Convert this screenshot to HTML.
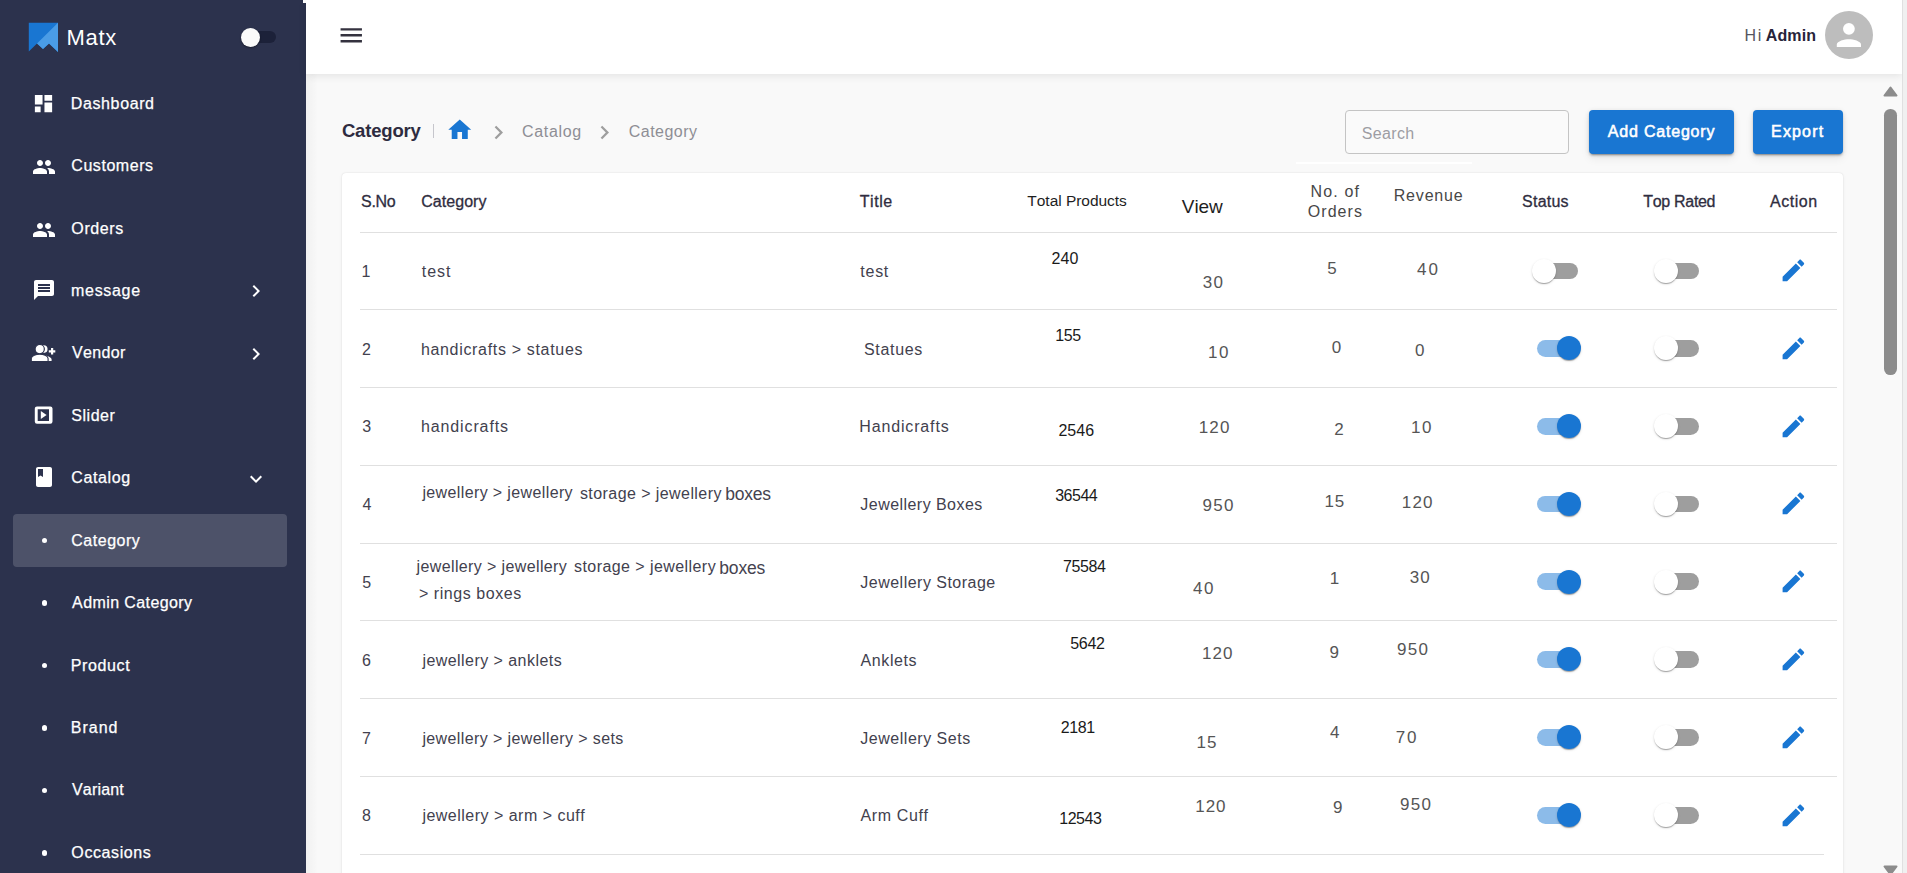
<!DOCTYPE html>
<html><head><meta charset="utf-8"><style>
html,body{margin:0;padding:0;width:1907px;height:873px;overflow:hidden;background:#f9f9f9;font-family:"Liberation Sans",sans-serif;}
.t{position:absolute;white-space:pre;line-height:1.117;font-kerning:none;}
.ic{position:absolute;display:block;}
</style></head><body>
<div style="position:absolute;left:306px;top:74px;width:1596px;height:799px;background:#f9f9f9"></div>
<div style="position:absolute;left:306px;top:74px;width:12px;height:799px;background:linear-gradient(to right,rgba(0,0,0,0.035),rgba(0,0,0,0))"></div>
<div style="position:absolute;left:0;top:0;width:306px;height:873px;background:#2c324d"></div>
<div style="position:absolute;left:303px;top:0;width:3px;height:3px;background:#fff"></div>
<svg class="ic" style="left:28px;top:22px;width:31px;height:31px" viewBox="0 0 31 31">
<polygon fill="#1976d2" points="0.8,0.8 30,0.8 30,30 21,21.5 15,27 9,21.5 0.8,29.5"/>
<polygon fill="#4a9ce6" points="30,0.8 30,30 21,21.5 15,27 9,21.5"/>
</svg>
<div class="t" style="left:66.40px;top:25.79px;font-size:22px;color:#ffffff;font-weight:400;letter-spacing:0.722px;">Matx</div>
<div style="position:absolute;left:243px;top:31px;width:33px;height:12px;border-radius:6px;background:#1c2139"></div>
<div style="position:absolute;left:241px;top:28px;width:19px;height:19px;border-radius:50%;background:#fafafa;box-shadow:0 1px 2px rgba(0,0,0,.4)"></div>
<svg class="ic" style="left:32.25px;top:91.50px;width:23px;height:23px" viewBox="0 0 24 24"><path fill="#ffffff" d="M3 13h8V3H3v10zm0 8h6v-6H3v6zm10 0h8V11h-8v10zm0-18v6h8V3h-8z"/></svg>
<div class="t" style="left:70.79px;top:94.92px;font-size:16px;color:#ffffff;font-weight:400;letter-spacing:0.621px;-webkit-text-stroke:0.25px #fff;">Dashboard</div>
<svg class="ic" style="left:31.60px;top:155.43px;width:24px;height:24px" viewBox="0 0 24 24"><path fill="#ffffff" d="M16 11c1.66 0 2.99-1.34 2.99-3S17.66 5 16 5c-1.66 0-3 1.34-3 3s1.34 3 3 3zm-8 0c1.66 0 2.99-1.34 2.99-3S9.66 5 8 5C6.34 5 5 6.34 5 8s1.34 3 3 3zm0 2c-2.33 0-7 1.17-7 3.5V19h14v-2.5c0-2.330-4.67-3.5-7-3.5zm8 0c-.29 0-.62.02-.97.05 1.16.84 1.97 1.970 1.97 3.45V19h6v-2.5c0-2.33-4.67-3.5-7-3.5z"/></svg>
<div class="t" style="left:71.29px;top:156.92px;font-size:16px;color:#ffffff;font-weight:400;letter-spacing:0.555px;-webkit-text-stroke:0.25px #fff;">Customers</div>
<svg class="ic" style="left:31.60px;top:217.86px;width:24px;height:24px" viewBox="0 0 24 24"><path fill="#ffffff" d="M16 11c1.66 0 2.99-1.34 2.99-3S17.66 5 16 5c-1.66 0-3 1.34-3 3s1.34 3 3 3zm-8 0c1.66 0 2.99-1.34 2.99-3S9.66 5 8 5C6.34 5 5 6.34 5 8s1.34 3 3 3zm0 2c-2.33 0-7 1.17-7 3.5V19h14v-2.5c0-2.330-4.67-3.5-7-3.5zm8 0c-.29 0-.62.02-.97.05 1.16.84 1.97 1.970 1.97 3.45V19h6v-2.5c0-2.33-4.67-3.5-7-3.5z"/></svg>
<div class="t" style="left:71.34px;top:219.92px;font-size:16px;color:#ffffff;font-weight:400;letter-spacing:0.608px;-webkit-text-stroke:0.25px #fff;">Orders</div>
<svg class="ic" style="left:31.50px;top:277.79px;width:24px;height:24px" viewBox="0 0 24 24"><path fill="#ffffff" d="M20 2H4c-1.1 0-1.99.9-1.99 2L2 22l4-4h14c1.1 0 2-.9 2-2V4c0-1.1-.9-2-2-2zm-2 12H6v-2h12v2zm0-3H6V9h12v2zm0-3H6V6h12v2z"/></svg>
<div class="t" style="left:71.04px;top:281.92px;font-size:16px;color:#ffffff;font-weight:400;letter-spacing:0.692px;-webkit-text-stroke:0.25px #fff;">message</div>
<svg class="ic" style="left:244.40px;top:279.49px;width:24px;height:24px" viewBox="0 0 24 24"><path fill="#ffffff" d="M10 6L8.59 7.41 13.17 12l-4.58 4.59L10 18l6-6z"/></svg>
<svg class="ic" style="left:25px;top:337.00px;width:40px;height:30px" viewBox="0 0 40 30">
<circle cx="18.7" cy="12.1" r="3.85" fill="#fff"/>
<path fill="#fff" d="M15 24.05V18.2c4.5-.3 11.6 1.2 11.6 4.2v1.65z"/>
<circle cx="14.7" cy="12.1" r="4.65" fill="#fff" stroke="#2c324d" stroke-width="1.2"/>
<path fill="#fff" stroke="#2c324d" stroke-width="1.1" d="M6.3 24.6V21.6c0-2.9 5-4.4 8.4-4.4s8.4 1.5 8.4 4.4v3z"/>
<path fill="#fff" d="M26 11h2.2v2.3h2.1v2.1h-2.1v2.1H26v-2.1h-2.2v-2.1H26z"/>
</svg>
<div class="t" style="left:72.03px;top:343.92px;font-size:16px;color:#ffffff;font-weight:400;letter-spacing:0.368px;-webkit-text-stroke:0.25px #fff;">Vendor</div>
<svg class="ic" style="left:244.40px;top:341.92px;width:24px;height:24px" viewBox="0 0 24 24"><path fill="#ffffff" d="M10 6L8.59 7.41 13.17 12l-4.58 4.59L10 18l6-6z"/></svg>
<svg class="ic" style="left:25px;top:400.00px;width:40px;height:30px" viewBox="0 0 40 30">
<path fill="#fff" fill-rule="evenodd" d="M12 6.4h13.3a2.2 2.2 0 0 1 2.2 2.2v12.9a2.2 2.2 0 0 1-2.2 2.2H12a2.2 2.2 0 0 1-2.2-2.2V8.6A2.2 2.2 0 0 1 12 6.4zM12.7 9.2v11.8h11.3V9.2z"/>
<path fill="#fff" d="M15.8 11L21.6 15.05 15.8 19.1z"/>
</svg>
<div class="t" style="left:71.37px;top:406.92px;font-size:16px;color:#ffffff;font-weight:400;letter-spacing:0.497px;-webkit-text-stroke:0.25px #fff;">Slider</div>
<svg class="ic" style="left:31.50px;top:464.58px;width:24px;height:24px" viewBox="0 0 24 24"><path fill="#ffffff" d="M18 2H6c-1.1 0-2 .9-2 2v16c0 1.1.9 2 2 2h12c1.1 0 2-.9 2-2V4c0-1.1-.9-2-2-2zM6 4h5v8l-2.5-1.5L6 12V4z"/></svg>
<div class="t" style="left:71.29px;top:468.92px;font-size:16px;color:#ffffff;font-weight:400;letter-spacing:0.616px;-webkit-text-stroke:0.25px #fff;">Catalog</div>
<svg class="ic" style="left:244.00px;top:466.58px;width:24px;height:24px" viewBox="0 0 24 24"><path fill="#ffffff" d="M16.59 8.59L12 13.17 7.41 8.59 6 10l6 6 6-6z"/></svg>
<div style="position:absolute;left:13px;top:514px;width:274px;height:53px;border-radius:4px;background:rgba(255,255,255,0.16)"></div>
<div style="position:absolute;left:41.70px;top:537.81px;width:5.6px;height:5.6px;border-radius:50%;background:#fff"></div>
<div class="t" style="left:71.29px;top:531.92px;font-size:16px;color:#ffffff;font-weight:400;letter-spacing:0.517px;-webkit-text-stroke:0.25px #fff;">Category</div>
<div style="position:absolute;left:41.70px;top:600.24px;width:5.6px;height:5.6px;border-radius:50%;background:#fff"></div>
<div class="t" style="left:72.07px;top:593.92px;font-size:16px;color:#ffffff;font-weight:400;letter-spacing:0.403px;-webkit-text-stroke:0.25px #fff;">Admin Category</div>
<div style="position:absolute;left:41.70px;top:662.67px;width:5.6px;height:5.6px;border-radius:50%;background:#fff"></div>
<div class="t" style="left:70.79px;top:656.92px;font-size:16px;color:#ffffff;font-weight:400;letter-spacing:0.615px;-webkit-text-stroke:0.25px #fff;">Product</div>
<div style="position:absolute;left:41.70px;top:725.10px;width:5.6px;height:5.6px;border-radius:50%;background:#fff"></div>
<div class="t" style="left:70.79px;top:718.92px;font-size:16px;color:#ffffff;font-weight:400;letter-spacing:0.987px;-webkit-text-stroke:0.25px #fff;">Brand</div>
<div style="position:absolute;left:41.70px;top:787.53px;width:5.6px;height:5.6px;border-radius:50%;background:#fff"></div>
<div class="t" style="left:72.03px;top:780.92px;font-size:16px;color:#ffffff;font-weight:400;letter-spacing:0.182px;-webkit-text-stroke:0.25px #fff;">Variant</div>
<div style="position:absolute;left:41.70px;top:849.96px;width:5.6px;height:5.6px;border-radius:50%;background:#fff"></div>
<div class="t" style="left:71.34px;top:843.92px;font-size:16px;color:#ffffff;font-weight:400;letter-spacing:0.605px;-webkit-text-stroke:0.25px #fff;">Occasions</div>
<div style="position:absolute;left:306px;top:0;width:1596px;height:74px;background:#fff;box-shadow:0 2px 8px rgba(0,0,0,0.09)"></div>
<svg class="ic" style="left:337.15px;top:21.05px;width:28.5px;height:28.5px" viewBox="0 0 24 24"><path fill="#34323f" d="M3 18h18v-2H3v2zm0-5h18v-2H3v2zm0-7v2h18V6H3z"/></svg>
<div class="t" style="left:1744.49px;top:26.92px;font-size:16px;color:#555560;font-weight:400;letter-spacing:1.681px;">Hi</div>
<div class="t" style="left:1765.80px;top:26.92px;font-size:16px;color:#27243a;font-weight:700;letter-spacing:0.104px;">Admin</div>
<div style="position:absolute;left:1825px;top:11px;width:48px;height:48px;border-radius:50%;background:#bdbdbd"></div>
<svg class="ic" style="left:1825px;top:11px;width:48px;height:48px" viewBox="0 0 48 48"><circle cx="23.9" cy="17.8" r="5.9" fill="#fff"/><path fill="#fff" d="M11.8 36v-2.5c0-3.4 7.8-5.3 12.1-5.3s12.1 1.9 12.1 5.3V36z"/></svg>
<div class="t" style="left:341.94px;top:120.66px;font-size:18.5px;color:#2e2c40;font-weight:700;letter-spacing:-0.176px;">Category</div>
<div style="position:absolute;left:433px;top:124px;width:1.2px;height:14px;background:#c6c6cc"></div>
<svg class="ic" style="left:445.85px;top:115.55px;width:27.5px;height:27.5px" viewBox="0 0 24 24"><path fill="#1976d2" d="M10 20v-6h4v6h5v-8h3L12 3 2 12h3v8z"/></svg>
<svg class="ic" style="left:485.00px;top:119.30px;width:27px;height:27px" viewBox="0 0 24 24"><path fill="#9e9e9e" d="M10 6L8.59 7.41 13.17 12l-4.58 4.59L10 18l6-6z"/></svg>
<div class="t" style="left:521.99px;top:122.92px;font-size:16px;color:#8e8e95;font-weight:400;letter-spacing:0.666px;">Catalog</div>
<svg class="ic" style="left:591.30px;top:119.30px;width:27px;height:27px" viewBox="0 0 24 24"><path fill="#9e9e9e" d="M10 6L8.59 7.41 13.17 12l-4.58 4.59L10 18l6-6z"/></svg>
<div class="t" style="left:628.79px;top:122.92px;font-size:16px;color:#8e8e95;font-weight:400;letter-spacing:0.475px;">Category</div>
<div style="position:absolute;left:1345px;top:110px;width:222px;height:42px;border:1px solid #c4c4c4;border-radius:4px;background:#fafafa"></div>
<div class="t" style="left:1361.67px;top:124.92px;font-size:16px;color:#9d9da3;font-weight:400;letter-spacing:0.374px;">Search</div>
<div style="position:absolute;left:1589px;top:110px;width:145px;height:44px;border-radius:4px;background:#1976d2;box-shadow:0 3px 1px -2px rgba(0,0,0,.2),0 2px 2px 0 rgba(0,0,0,.14),0 1px 5px 0 rgba(0,0,0,.12),0 5px 10px rgba(0,0,0,.06)"></div>
<div class="t" style="left:1607.87px;top:122.92px;font-size:16px;color:#ffffff;font-weight:400;letter-spacing:0.793px;-webkit-text-stroke:0.55px #fff;">Add Category</div>
<div style="position:absolute;left:1753px;top:110px;width:90px;height:44px;border-radius:4px;background:#1976d2;box-shadow:0 3px 1px -2px rgba(0,0,0,.2),0 2px 2px 0 rgba(0,0,0,.14),0 1px 5px 0 rgba(0,0,0,.12),0 5px 10px rgba(0,0,0,.06)"></div>
<div class="t" style="left:1771.09px;top:122.92px;font-size:16px;color:#ffffff;font-weight:400;letter-spacing:1.157px;-webkit-text-stroke:0.55px #fff;">Export</div>
<div style="position:absolute;left:1296px;top:161.5px;width:176px;height:2px;background:#fff"></div>
<div style="position:absolute;left:342px;top:173px;width:1501px;height:720px;background:#fff;border-radius:4px;box-shadow:0 0 1.5px rgba(0,0,0,0.13),0 1px 4px rgba(0,0,0,0.05)"></div>
<div class="t" style="left:361.07px;top:192.92px;font-size:16px;color:#2f2d40;font-weight:400;letter-spacing:-0.324px;-webkit-text-stroke:0.3px #2f2d40;">S.No</div>
<div class="t" style="left:421.29px;top:192.92px;font-size:16px;color:#2f2d40;font-weight:400;letter-spacing:0.032px;-webkit-text-stroke:0.3px #2f2d40;">Category</div>
<div class="t" style="left:859.64px;top:192.92px;font-size:16px;color:#2f2d40;font-weight:400;letter-spacing:0.586px;-webkit-text-stroke:0.3px #2f2d40;">Title</div>
<div class="t" style="left:1027.35px;top:192.37px;font-size:15.5px;color:#1e1e1e;font-weight:400;letter-spacing:-0.033px;">Total Products</div>
<div class="t" style="left:1181.82px;top:196.21px;font-size:19px;color:#1e1e1e;font-weight:400;letter-spacing:-0.082px;">View</div>
<div class="t" style="left:1310.59px;top:182.92px;font-size:16px;color:#474747;font-weight:400;letter-spacing:1.120px;">No. of</div>
<div class="t" style="left:1307.74px;top:202.92px;font-size:16px;color:#474747;font-weight:400;letter-spacing:1.068px;">Orders</div>
<div class="t" style="left:1393.69px;top:186.92px;font-size:16px;color:#474747;font-weight:400;letter-spacing:0.829px;">Revenue</div>
<div class="t" style="left:1522.07px;top:192.92px;font-size:16px;color:#2f2d40;font-weight:400;letter-spacing:0.229px;-webkit-text-stroke:0.3px #2f2d40;">Status</div>
<div class="t" style="left:1643.24px;top:192.92px;font-size:16px;color:#2f2d40;font-weight:400;letter-spacing:-0.303px;-webkit-text-stroke:0.3px #2f2d40;">Top Rated</div>
<div class="t" style="left:1769.97px;top:192.92px;font-size:16px;color:#2f2d40;font-weight:400;letter-spacing:0.520px;-webkit-text-stroke:0.3px #2f2d40;">Action</div>
<div style="position:absolute;left:360px;top:232.0px;width:1477px;height:1px;background:#e0e0e0"></div>
<div style="position:absolute;left:360px;top:309.0px;width:1477px;height:1px;background:#e0e0e0"></div>
<div style="position:absolute;left:360px;top:386.8px;width:1477px;height:1px;background:#e0e0e0"></div>
<div style="position:absolute;left:360px;top:464.7px;width:1477px;height:1px;background:#e0e0e0"></div>
<div style="position:absolute;left:360px;top:542.5px;width:1477px;height:1px;background:#e0e0e0"></div>
<div style="position:absolute;left:360px;top:620.1px;width:1477px;height:1px;background:#e0e0e0"></div>
<div style="position:absolute;left:360px;top:697.7px;width:1477px;height:1px;background:#e0e0e0"></div>
<div style="position:absolute;left:360px;top:775.9px;width:1477px;height:1px;background:#e0e0e0"></div>
<div style="position:absolute;left:360px;top:853.7px;width:1464px;height:1px;background:#e0e0e0"></div>
<div class="t" style="left:361.58px;top:262.92px;font-size:16px;color:#42414e;font-weight:400;letter-spacing:0.000px;">1</div>
<div class="t" style="left:421.76px;top:262.92px;font-size:16px;color:#42414e;font-weight:400;letter-spacing:0.990px;">test</div>
<div class="t" style="left:860.36px;top:262.92px;font-size:16px;color:#42414e;font-weight:400;letter-spacing:0.723px;">test</div>
<div class="t" style="left:362.00px;top:340.92px;font-size:16px;color:#42414e;font-weight:400;letter-spacing:0.000px;">2</div>
<div class="t" style="left:420.89px;top:340.92px;font-size:16px;color:#42414e;font-weight:400;letter-spacing:0.675px;">handicrafts &gt; statues</div>
<div class="t" style="left:863.97px;top:340.92px;font-size:16px;color:#42414e;font-weight:400;letter-spacing:0.691px;">Statues</div>
<div class="t" style="left:362.19px;top:417.92px;font-size:16px;color:#42414e;font-weight:400;letter-spacing:0.000px;">3</div>
<div class="t" style="left:420.89px;top:417.92px;font-size:16px;color:#42414e;font-weight:400;letter-spacing:0.892px;">handicrafts</div>
<div class="t" style="left:859.29px;top:417.92px;font-size:16px;color:#42414e;font-weight:400;letter-spacing:0.847px;">Handicrafts</div>
<div class="t" style="left:362.43px;top:495.92px;font-size:16px;color:#42414e;font-weight:400;letter-spacing:0.000px;">4</div>
<div class="t" style="left:860.35px;top:495.92px;font-size:16px;color:#42414e;font-weight:400;letter-spacing:0.452px;">Jewellery Boxes</div>
<div class="t" style="left:362.16px;top:573.92px;font-size:16px;color:#42414e;font-weight:400;letter-spacing:0.000px;">5</div>
<div class="t" style="left:860.35px;top:573.92px;font-size:16px;color:#42414e;font-weight:400;letter-spacing:0.481px;">Jewellery Storage</div>
<div class="t" style="left:361.99px;top:651.92px;font-size:16px;color:#42414e;font-weight:400;letter-spacing:0.000px;">6</div>
<div class="t" style="left:422.39px;top:651.92px;font-size:16px;color:#42414e;font-weight:400;letter-spacing:0.451px;">jewellery &gt; anklets</div>
<div class="t" style="left:860.57px;top:651.92px;font-size:16px;color:#42414e;font-weight:400;letter-spacing:0.590px;">Anklets</div>
<div class="t" style="left:361.98px;top:729.92px;font-size:16px;color:#42414e;font-weight:400;letter-spacing:0.000px;">7</div>
<div class="t" style="left:422.39px;top:729.92px;font-size:16px;color:#42414e;font-weight:400;letter-spacing:0.396px;">jewellery &gt; jewellery &gt; sets</div>
<div class="t" style="left:860.35px;top:729.92px;font-size:16px;color:#42414e;font-weight:400;letter-spacing:0.514px;">Jewellery Sets</div>
<div class="t" style="left:362.10px;top:806.92px;font-size:16px;color:#42414e;font-weight:400;letter-spacing:0.000px;">8</div>
<div class="t" style="left:422.39px;top:806.92px;font-size:16px;color:#42414e;font-weight:400;letter-spacing:0.487px;">jewellery &gt; arm &gt; cuff</div>
<div class="t" style="left:860.57px;top:806.92px;font-size:16px;color:#42414e;font-weight:400;letter-spacing:0.613px;">Arm Cuff</div>
<div class="t" style="left:422.39px;top:483.92px;font-size:16px;color:#42414e;font-weight:400;letter-spacing:0.376px;">jewellery &gt; jewellery</div>
<div class="t" style="left:579.95px;top:484.92px;font-size:16px;color:#42414e;font-weight:400;letter-spacing:0.424px;">storage &gt; jewellery</div>
<div class="t" style="left:725.17px;top:484.56px;font-size:17.5px;color:#45434f;font-weight:400;letter-spacing:-0.184px;">boxes</div>
<div class="t" style="left:416.59px;top:557.92px;font-size:16px;color:#42414e;font-weight:400;letter-spacing:0.376px;">jewellery &gt; jewellery</div>
<div class="t" style="left:574.05px;top:557.92px;font-size:16px;color:#42414e;font-weight:400;letter-spacing:0.430px;">storage &gt; jewellery</div>
<div class="t" style="left:719.27px;top:558.56px;font-size:17.5px;color:#45434f;font-weight:400;letter-spacing:-0.159px;">boxes</div>
<div class="t" style="left:418.91px;top:584.92px;font-size:16px;color:#42414e;font-weight:400;letter-spacing:0.555px;">&gt; rings boxes</div>
<div class="t" style="left:1051.50px;top:249.92px;font-size:16px;color:#1a1a1a;font-weight:400;letter-spacing:0.067px;">240</div>
<div class="t" style="left:1202.75px;top:273.01px;font-size:17px;color:#555555;font-weight:400;letter-spacing:1.402px;">30</div>
<div class="t" style="left:1327.32px;top:259.01px;font-size:17px;color:#555555;font-weight:400;letter-spacing:0.000px;">5</div>
<div class="t" style="left:1416.91px;top:260.01px;font-size:17px;color:#555555;font-weight:400;letter-spacing:2.045px;">40</div>
<div class="t" style="left:1055.28px;top:326.92px;font-size:16px;color:#1a1a1a;font-weight:400;letter-spacing:-0.402px;">155</div>
<div class="t" style="left:1207.91px;top:343.01px;font-size:17px;color:#555555;font-weight:400;letter-spacing:1.550px;">10</div>
<div class="t" style="left:1331.64px;top:338.01px;font-size:17px;color:#555555;font-weight:400;letter-spacing:0.000px;">0</div>
<div class="t" style="left:1415.04px;top:341.01px;font-size:17px;color:#555555;font-weight:400;letter-spacing:0.000px;">0</div>
<div class="t" style="left:1058.40px;top:421.92px;font-size:16px;color:#1a1a1a;font-weight:400;letter-spacing:0.038px;">2546</div>
<div class="t" style="left:1198.71px;top:418.01px;font-size:17px;color:#555555;font-weight:400;letter-spacing:1.198px;">120</div>
<div class="t" style="left:1334.15px;top:420.01px;font-size:17px;color:#555555;font-weight:400;letter-spacing:0.000px;">2</div>
<div class="t" style="left:1410.91px;top:418.01px;font-size:17px;color:#555555;font-weight:400;letter-spacing:1.550px;">10</div>
<div class="t" style="left:1055.19px;top:486.92px;font-size:16px;color:#1a1a1a;font-weight:400;letter-spacing:-0.479px;">36544</div>
<div class="t" style="left:1202.60px;top:496.01px;font-size:17px;color:#555555;font-weight:400;letter-spacing:1.199px;">950</div>
<div class="t" style="left:1324.41px;top:492.01px;font-size:17px;color:#555555;font-weight:400;letter-spacing:0.900px;">15</div>
<div class="t" style="left:1401.71px;top:493.01px;font-size:17px;color:#555555;font-weight:400;letter-spacing:1.248px;">120</div>
<div class="t" style="left:1062.98px;top:557.92px;font-size:16px;color:#1a1a1a;font-weight:400;letter-spacing:-0.401px;">75584</div>
<div class="t" style="left:1193.11px;top:579.01px;font-size:17px;color:#555555;font-weight:400;letter-spacing:1.345px;">40</div>
<div class="t" style="left:1329.71px;top:569.01px;font-size:17px;color:#555555;font-weight:400;letter-spacing:0.000px;">1</div>
<div class="t" style="left:1409.75px;top:568.01px;font-size:17px;color:#555555;font-weight:400;letter-spacing:1.002px;">30</div>
<div class="t" style="left:1070.16px;top:634.92px;font-size:16px;color:#1a1a1a;font-weight:400;letter-spacing:-0.249px;">5642</div>
<div class="t" style="left:1202.11px;top:644.01px;font-size:17px;color:#555555;font-weight:400;letter-spacing:0.998px;">120</div>
<div class="t" style="left:1329.50px;top:643.01px;font-size:17px;color:#555555;font-weight:400;letter-spacing:0.000px;">9</div>
<div class="t" style="left:1396.90px;top:640.01px;font-size:17px;color:#555555;font-weight:400;letter-spacing:1.299px;">950</div>
<div class="t" style="left:1060.70px;top:718.92px;font-size:16px;color:#1a1a1a;font-weight:400;letter-spacing:-0.403px;">2181</div>
<div class="t" style="left:1196.41px;top:733.01px;font-size:17px;color:#555555;font-weight:400;letter-spacing:1.100px;">15</div>
<div class="t" style="left:1329.91px;top:723.01px;font-size:17px;color:#555555;font-weight:400;letter-spacing:0.000px;">4</div>
<div class="t" style="left:1395.63px;top:728.01px;font-size:17px;color:#555555;font-weight:400;letter-spacing:1.826px;">70</div>
<div class="t" style="left:1059.18px;top:809.92px;font-size:16px;color:#1a1a1a;font-weight:400;letter-spacing:-0.443px;">12543</div>
<div class="t" style="left:1195.21px;top:797.01px;font-size:17px;color:#555555;font-weight:400;letter-spacing:0.998px;">120</div>
<div class="t" style="left:1333.00px;top:798.01px;font-size:17px;color:#555555;font-weight:400;letter-spacing:0.000px;">9</div>
<div class="t" style="left:1399.90px;top:795.01px;font-size:17px;color:#555555;font-weight:400;letter-spacing:1.299px;">950</div>
<div style="position:absolute;left:1537.0px;top:262.6px;width:40.8px;height:16.8px;border-radius:8.4px;background:#9e9e9e"></div><div style="position:absolute;left:1532.4px;top:259.0px;width:24px;height:24px;border-radius:50%;background:#ffffff;box-shadow:0 2px 1px -1px rgba(0,0,0,.2),0 1px 1px 0 rgba(0,0,0,.14),0 1px 3px 0 rgba(0,0,0,.12)"></div>
<div style="position:absolute;left:1658.5px;top:262.6px;width:40.8px;height:16.8px;border-radius:8.4px;background:#9e9e9e"></div><div style="position:absolute;left:1653.9px;top:259.0px;width:24px;height:24px;border-radius:50%;background:#ffffff;box-shadow:0 2px 1px -1px rgba(0,0,0,.2),0 1px 1px 0 rgba(0,0,0,.14),0 1px 3px 0 rgba(0,0,0,.12)"></div>
<svg class="ic" style="left:1779.40px;top:256.30px;width:28.8px;height:28.8px" viewBox="0 0 24 24"><path fill="#1976d2" d="M3 17.25V21h3.75L17.81 9.94l-3.75-3.75L3 17.25zM20.71 7.04c.39-.39.39-1.02 0-1.41l-2.34-2.34c-.39-.39-1.02-.39-1.41 0l-1.83 1.83 3.750 3.75 1.83-1.83z"/></svg>
<div style="position:absolute;left:1537.0px;top:340.0px;width:40.8px;height:16.8px;border-radius:8.4px;background:#8cbbe9"></div><div style="position:absolute;left:1557.1px;top:336.4px;width:24px;height:24px;border-radius:50%;background:#1976d2;box-shadow:0 2px 1px -1px rgba(0,0,0,.2),0 1px 1px 0 rgba(0,0,0,.14),0 1px 3px 0 rgba(0,0,0,.12)"></div>
<div style="position:absolute;left:1658.5px;top:340.0px;width:40.8px;height:16.8px;border-radius:8.4px;background:#9e9e9e"></div><div style="position:absolute;left:1653.9px;top:336.4px;width:24px;height:24px;border-radius:50%;background:#ffffff;box-shadow:0 2px 1px -1px rgba(0,0,0,.2),0 1px 1px 0 rgba(0,0,0,.14),0 1px 3px 0 rgba(0,0,0,.12)"></div>
<svg class="ic" style="left:1779.40px;top:333.70px;width:28.8px;height:28.8px" viewBox="0 0 24 24"><path fill="#1976d2" d="M3 17.25V21h3.75L17.81 9.94l-3.75-3.75L3 17.25zM20.71 7.04c.39-.39.39-1.02 0-1.41l-2.34-2.34c-.39-.39-1.02-.39-1.41 0l-1.83 1.83 3.750 3.75 1.83-1.83z"/></svg>
<div style="position:absolute;left:1537.0px;top:417.9px;width:40.8px;height:16.8px;border-radius:8.4px;background:#8cbbe9"></div><div style="position:absolute;left:1557.1px;top:414.2px;width:24px;height:24px;border-radius:50%;background:#1976d2;box-shadow:0 2px 1px -1px rgba(0,0,0,.2),0 1px 1px 0 rgba(0,0,0,.14),0 1px 3px 0 rgba(0,0,0,.12)"></div>
<div style="position:absolute;left:1658.5px;top:417.9px;width:40.8px;height:16.8px;border-radius:8.4px;background:#9e9e9e"></div><div style="position:absolute;left:1653.9px;top:414.2px;width:24px;height:24px;border-radius:50%;background:#ffffff;box-shadow:0 2px 1px -1px rgba(0,0,0,.2),0 1px 1px 0 rgba(0,0,0,.14),0 1px 3px 0 rgba(0,0,0,.12)"></div>
<svg class="ic" style="left:1779.40px;top:411.55px;width:28.8px;height:28.8px" viewBox="0 0 24 24"><path fill="#1976d2" d="M3 17.25V21h3.75L17.81 9.94l-3.75-3.75L3 17.25zM20.71 7.04c.39-.39.39-1.02 0-1.41l-2.34-2.34c-.39-.39-1.02-.39-1.41 0l-1.83 1.83 3.750 3.75 1.83-1.83z"/></svg>
<div style="position:absolute;left:1537.0px;top:495.7px;width:40.8px;height:16.8px;border-radius:8.4px;background:#8cbbe9"></div><div style="position:absolute;left:1557.1px;top:492.1px;width:24px;height:24px;border-radius:50%;background:#1976d2;box-shadow:0 2px 1px -1px rgba(0,0,0,.2),0 1px 1px 0 rgba(0,0,0,.14),0 1px 3px 0 rgba(0,0,0,.12)"></div>
<div style="position:absolute;left:1658.5px;top:495.7px;width:40.8px;height:16.8px;border-radius:8.4px;background:#9e9e9e"></div><div style="position:absolute;left:1653.9px;top:492.1px;width:24px;height:24px;border-radius:50%;background:#ffffff;box-shadow:0 2px 1px -1px rgba(0,0,0,.2),0 1px 1px 0 rgba(0,0,0,.14),0 1px 3px 0 rgba(0,0,0,.12)"></div>
<svg class="ic" style="left:1779.40px;top:489.40px;width:28.8px;height:28.8px" viewBox="0 0 24 24"><path fill="#1976d2" d="M3 17.25V21h3.75L17.81 9.94l-3.75-3.75L3 17.25zM20.71 7.04c.39-.39.39-1.02 0-1.41l-2.34-2.34c-.39-.39-1.02-.39-1.41 0l-1.83 1.83 3.750 3.75 1.83-1.83z"/></svg>
<div style="position:absolute;left:1537.0px;top:573.4px;width:40.8px;height:16.8px;border-radius:8.4px;background:#8cbbe9"></div><div style="position:absolute;left:1557.1px;top:569.8px;width:24px;height:24px;border-radius:50%;background:#1976d2;box-shadow:0 2px 1px -1px rgba(0,0,0,.2),0 1px 1px 0 rgba(0,0,0,.14),0 1px 3px 0 rgba(0,0,0,.12)"></div>
<div style="position:absolute;left:1658.5px;top:573.4px;width:40.8px;height:16.8px;border-radius:8.4px;background:#9e9e9e"></div><div style="position:absolute;left:1653.9px;top:569.8px;width:24px;height:24px;border-radius:50%;background:#ffffff;box-shadow:0 2px 1px -1px rgba(0,0,0,.2),0 1px 1px 0 rgba(0,0,0,.14),0 1px 3px 0 rgba(0,0,0,.12)"></div>
<svg class="ic" style="left:1779.40px;top:567.10px;width:28.8px;height:28.8px" viewBox="0 0 24 24"><path fill="#1976d2" d="M3 17.25V21h3.75L17.81 9.94l-3.75-3.75L3 17.25zM20.71 7.04c.39-.39.39-1.02 0-1.41l-2.34-2.34c-.39-.39-1.02-.39-1.41 0l-1.83 1.83 3.750 3.75 1.83-1.83z"/></svg>
<div style="position:absolute;left:1537.0px;top:651.0px;width:40.8px;height:16.8px;border-radius:8.4px;background:#8cbbe9"></div><div style="position:absolute;left:1557.1px;top:647.4px;width:24px;height:24px;border-radius:50%;background:#1976d2;box-shadow:0 2px 1px -1px rgba(0,0,0,.2),0 1px 1px 0 rgba(0,0,0,.14),0 1px 3px 0 rgba(0,0,0,.12)"></div>
<div style="position:absolute;left:1658.5px;top:651.0px;width:40.8px;height:16.8px;border-radius:8.4px;background:#9e9e9e"></div><div style="position:absolute;left:1653.9px;top:647.4px;width:24px;height:24px;border-radius:50%;background:#ffffff;box-shadow:0 2px 1px -1px rgba(0,0,0,.2),0 1px 1px 0 rgba(0,0,0,.14),0 1px 3px 0 rgba(0,0,0,.12)"></div>
<svg class="ic" style="left:1779.40px;top:644.70px;width:28.8px;height:28.8px" viewBox="0 0 24 24"><path fill="#1976d2" d="M3 17.25V21h3.75L17.81 9.94l-3.75-3.75L3 17.25zM20.71 7.04c.39-.39.39-1.02 0-1.41l-2.34-2.34c-.39-.39-1.02-.39-1.41 0l-1.83 1.83 3.750 3.75 1.83-1.83z"/></svg>
<div style="position:absolute;left:1537.0px;top:728.9px;width:40.8px;height:16.8px;border-radius:8.4px;background:#8cbbe9"></div><div style="position:absolute;left:1557.1px;top:725.3px;width:24px;height:24px;border-radius:50%;background:#1976d2;box-shadow:0 2px 1px -1px rgba(0,0,0,.2),0 1px 1px 0 rgba(0,0,0,.14),0 1px 3px 0 rgba(0,0,0,.12)"></div>
<div style="position:absolute;left:1658.5px;top:728.9px;width:40.8px;height:16.8px;border-radius:8.4px;background:#9e9e9e"></div><div style="position:absolute;left:1653.9px;top:725.3px;width:24px;height:24px;border-radius:50%;background:#ffffff;box-shadow:0 2px 1px -1px rgba(0,0,0,.2),0 1px 1px 0 rgba(0,0,0,.14),0 1px 3px 0 rgba(0,0,0,.12)"></div>
<svg class="ic" style="left:1779.40px;top:722.60px;width:28.8px;height:28.8px" viewBox="0 0 24 24"><path fill="#1976d2" d="M3 17.25V21h3.75L17.81 9.94l-3.75-3.75L3 17.25zM20.71 7.04c.39-.39.39-1.02 0-1.41l-2.34-2.34c-.39-.39-1.02-.39-1.41 0l-1.83 1.83 3.750 3.75 1.83-1.83z"/></svg>
<div style="position:absolute;left:1537.0px;top:806.9px;width:40.8px;height:16.8px;border-radius:8.4px;background:#8cbbe9"></div><div style="position:absolute;left:1557.1px;top:803.3px;width:24px;height:24px;border-radius:50%;background:#1976d2;box-shadow:0 2px 1px -1px rgba(0,0,0,.2),0 1px 1px 0 rgba(0,0,0,.14),0 1px 3px 0 rgba(0,0,0,.12)"></div>
<div style="position:absolute;left:1658.5px;top:806.9px;width:40.8px;height:16.8px;border-radius:8.4px;background:#9e9e9e"></div><div style="position:absolute;left:1653.9px;top:803.3px;width:24px;height:24px;border-radius:50%;background:#ffffff;box-shadow:0 2px 1px -1px rgba(0,0,0,.2),0 1px 1px 0 rgba(0,0,0,.14),0 1px 3px 0 rgba(0,0,0,.12)"></div>
<svg class="ic" style="left:1779.40px;top:800.60px;width:28.8px;height:28.8px" viewBox="0 0 24 24"><path fill="#1976d2" d="M3 17.25V21h3.75L17.81 9.94l-3.75-3.75L3 17.25zM20.71 7.04c.39-.39.39-1.02 0-1.41l-2.34-2.34c-.39-.39-1.02-.39-1.41 0l-1.83 1.83 3.750 3.75 1.83-1.83z"/></svg>
<div style="position:absolute;left:1902px;top:0;width:5px;height:873px;background:#f0f0f0;border-left:1px solid #e0e0e0;box-sizing:border-box"></div>
<div style="position:absolute;left:1884.2px;top:109px;width:12.6px;height:266px;border-radius:6.3px;background:#8c8c8c"></div>
<svg class="ic" style="left:1883px;top:86px;width:15px;height:11px" viewBox="0 0 15 11"><path fill="#8c8c8c" stroke="#8c8c8c" stroke-width="2" stroke-linejoin="round" d="M7.5 1.5L13.5 9.5H1.5z"/></svg>
<svg class="ic" style="left:1883px;top:865px;width:15px;height:11px" viewBox="0 0 15 11"><path fill="#8c8c8c" stroke="#8c8c8c" stroke-width="2" stroke-linejoin="round" d="M1.5 1.5H13.5L7.5 9.5z"/></svg>
</body></html>
